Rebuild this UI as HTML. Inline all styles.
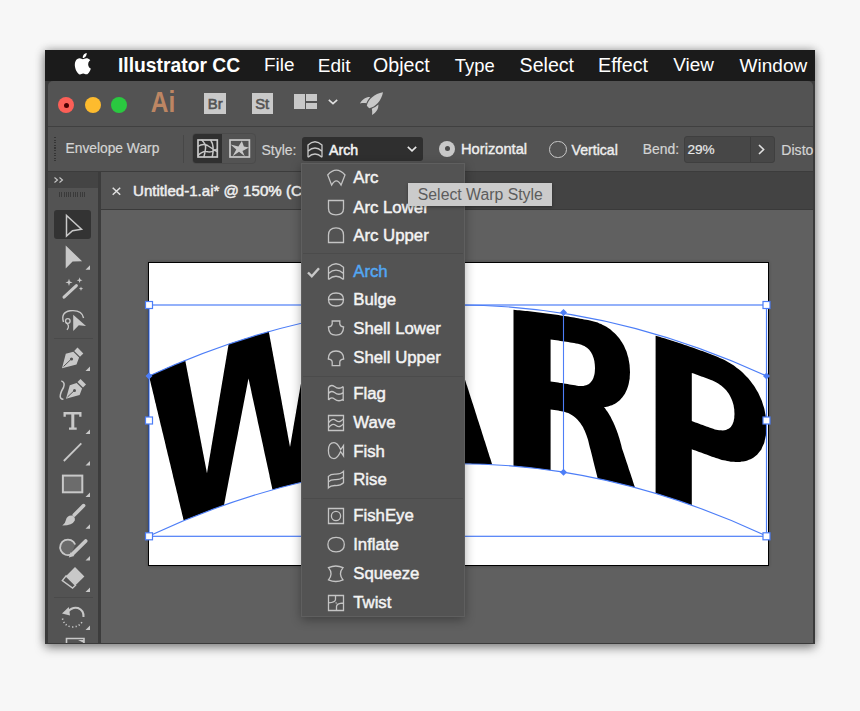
<!DOCTYPE html>
<html><head><meta charset="utf-8">
<style>
*{margin:0;padding:0;box-sizing:border-box}
html,body{width:860px;height:711px;overflow:hidden;background:#f7f7f7;font-family:"Liberation Sans",sans-serif}
.a{position:absolute}
.t{position:absolute;white-space:nowrap;line-height:1}
svg{position:absolute;overflow:visible}
</style></head><body>
<div class="a" style="left:45px;top:50px;width:770px;height:594px;background:#3a3a3a;box-shadow:0 4px 10px rgba(0,0,0,0.38),0 0 9px rgba(0,0,0,0.28)"></div>
<div class="a" style="left:45px;top:50px;width:770px;height:31px;background:#1b1b1b"></div>
<div class="a" style="left:47.5px;top:81px;width:765.5px;height:562px;background:#535353;border-radius:5px 5px 0 0"></div>
<svg style="left:72.6px;top:53.4px" width="19.6" height="21.4" viewBox="0 0 24 24" preserveAspectRatio="none"><path fill="#fff" d="M12.152 6.896c-.948 0-2.415-1.078-3.96-1.04-2.04.027-3.91 1.183-4.961 3.014-2.117 3.675-.546 9.103 1.519 12.09 1.013 1.454 2.208 3.09 3.792 3.039 1.52-.065 2.09-.987 3.935-.987 1.831 0 2.35.987 3.96.948 1.637-.026 2.676-1.48 3.676-2.948 1.156-1.688 1.636-3.325 1.662-3.415-.039-.013-3.182-1.221-3.22-4.857-.026-3.04 2.48-4.494 2.597-4.559-1.429-2.09-3.623-2.324-4.39-2.376-2-.156-3.675 1.09-4.61 1.09zM15.53 3.83c.843-1.012 1.4-2.427 1.245-3.83-1.207.052-2.662.805-3.532 1.818-.78.896-1.454 2.338-1.273 3.714 1.338.104 2.715-.688 3.559-1.701"/></svg>
<div class="t" style="left:118px;top:56.06px;font-size:19.3px;color:#fff;font-weight:bold;">Illustrator CC</div>
<div class="t" style="left:264px;top:56.40px;font-size:18.9px;color:#fff;font-weight:normal;">File</div>
<div class="t" style="left:317.8px;top:56.32px;font-size:19px;color:#fff;font-weight:normal;">Edit</div>
<div class="t" style="left:373px;top:55.81px;font-size:19.6px;color:#fff;font-weight:normal;">Object</div>
<div class="t" style="left:454.8px;top:56.82px;font-size:18.4px;color:#fff;font-weight:normal;">Type</div>
<div class="t" style="left:519.6px;top:55.81px;font-size:19.6px;color:#fff;font-weight:normal;">Select</div>
<div class="t" style="left:598px;top:55.72px;font-size:19.7px;color:#fff;font-weight:normal;">Effect</div>
<div class="t" style="left:673.3px;top:56.40px;font-size:18.9px;color:#fff;font-weight:normal;">View</div>
<div class="t" style="left:739.6px;top:56.32px;font-size:19px;color:#fff;font-weight:normal;">Window</div>
<div class="a" style="left:48px;top:125.6px;width:765px;height:1px;background:#404040"></div>
<div class="a" style="left:58.3px;top:97px;width:16px;height:16px;border-radius:50%;background:#fc5f57"></div>
<div class="a" style="left:84.6px;top:97px;width:16px;height:16px;border-radius:50%;background:#fdbb2e"></div>
<div class="a" style="left:110.9px;top:97px;width:16px;height:16px;border-radius:50%;background:#2ac840"></div>
<div class="a" style="left:63.8px;top:102.5px;width:5px;height:5px;border-radius:50%;background:#4a0002"></div>
<div class="t" style="left:150.8px;top:91.76px;font-size:24.5px;color:#bd8663;font-weight:bold;transform:scaleY(1.22);transform-origin:0 20.7px">Ai</div>
<div class="a" style="left:204.2px;top:92.8px;width:21.5px;height:21.5px;background:#c9c9c9"></div>
<div class="t" style="left:207.79999999999998px;top:96.67px;font-size:14.8px;color:#545454;font-weight:normal;-webkit-text-stroke:0.6px #545454">Br</div>
<div class="a" style="left:251.6px;top:92.8px;width:21.5px;height:21.5px;background:#c9c9c9"></div>
<div class="t" style="left:255.2px;top:96.67px;font-size:14.8px;color:#545454;font-weight:normal;-webkit-text-stroke:0.6px #545454">St</div>
<div class="a" style="left:294px;top:94.3px;width:10.6px;height:14.7px;background:#c8c8c8"></div>
<div class="a" style="left:306px;top:94.3px;width:10.7px;height:7px;background:#c8c8c8"></div>
<div class="a" style="left:306px;top:102.6px;width:10.7px;height:6.4px;background:#c8c8c8"></div>
<svg style="left:327.8px;top:99.3px" width="10" height="6"><path d="M0.8 0.8 L5 4.6 L9.2 0.8" fill="none" stroke="#e0e0e0" stroke-width="1.6"/></svg>
<svg style="left:359.8px;top:91.6px" width="23" height="23" viewBox="0 0 23 23"><path fill="#c8c8c8" d="M23 0.2 C14.5 1.5 8 7.5 6.8 13.8 L9.2 16.2 C15.5 15 21.5 8.5 23 0.2 Z M10.2 5 C6 4.8 2.2 7.2 0 11.5 C2.3 11 4.5 11 6.4 11.3 C7.3 9 8.6 6.8 10.2 5 Z M18.4 12.6 C18.6 17 16.2 20.8 12 23 C12.4 20.6 12.2 18.6 11.8 16.7 C14.2 15.8 16.4 14.4 18.4 12.6 Z"/></svg>
<div class="a" style="left:48px;top:171px;width:765px;height:1px;background:#3c3c3c"></div>
<div class="a" style="left:54px;top:137px;width:2.2px;height:24px;background:repeating-linear-gradient(#353535 0 1.2px,transparent 1.2px 2.6px)"></div>
<div class="t" style="left:65.5px;top:141.92px;font-size:13.8px;color:#d4d4d4;font-weight:normal;-webkit-text-stroke:0.2px #d4d4d4">Envelope Warp</div>
<div class="a" style="left:183px;top:135px;width:1px;height:28px;background:#474747"></div>
<div class="a" style="left:191.5px;top:133px;width:64.5px;height:31px;border:1px solid #4b4b4b;border-radius:4px"></div>
<div class="a" style="left:193px;top:134px;width:29px;height:29px;background:#303030;border-radius:3px 0 0 3px"></div>
<svg style="left:196.7px;top:139px" width="21.3" height="19" viewBox="0 0 21.3 19"><rect x="1" y="1" width="19.3" height="17" fill="none" stroke="#c8c8c8" stroke-width="1.7"/><path d="M0.8 7.5 Q6 4 10.5 6.5 Q15 9.5 20 12.5 M0.8 16.8 Q5.5 11.5 11 12.8 Q15 13.5 20 10 M4.5 0.8 Q9 5 8.6 9 Q8 14 6.8 18.2 M13.5 0.8 Q17.8 7 15.2 18.2" fill="none" stroke="#c8c8c8" stroke-width="1.5"/></svg>
<svg style="left:229.3px;top:139px" width="21.4" height="19" viewBox="0 0 21.4 19"><rect x="1" y="1" width="19.4" height="17" fill="none" stroke="#c8c8c8" stroke-width="1.7"/><path fill="#c8c8c8" d="M12.9 2 L14.9 7.5 L20 8.5 L13.5 12 L15.8 17.2 L10 12.7 L3.6 17.2 L7.3 10.6 L1.5 5.4 L9.4 7.5 Z"/></svg>
<div class="t" style="left:261.5px;top:142.75px;font-size:14px;color:#d4d4d4;font-weight:normal;-webkit-text-stroke:0.2px #d4d4d4">Style:</div>
<div class="a" style="left:302px;top:137px;width:121px;height:24px;background:#2f2f2f;border-radius:3px"></div>
<svg style="left:306.9px;top:140.5px" width="16" height="17" viewBox="0 0 16 17"><path d="M1 16.2 L1 4 Q8 -2.6 15 4 L15 16.2 M1 10.2 Q8 3.8 15 10.2 M1 16.2 Q8 9.8 15 16.2" fill="none" stroke="#c8c8c8" stroke-width="1.3"/></svg>
<div class="t" style="left:329px;top:142.58px;font-size:14.2px;color:#f4f4f4;font-weight:normal;-webkit-text-stroke:0.5px #f4f4f4">Arch</div>
<svg style="left:406.7px;top:146px" width="10" height="6"><path d="M0.8 0.8 L5 4.8 L9.2 0.8" fill="none" stroke="#e8e8e8" stroke-width="1.6"/></svg>
<div class="a" style="left:439.2px;top:140.9px;width:16px;height:16px;border-radius:50%;background:#c8c8c8"></div>
<div class="a" style="left:444.65px;top:146.35px;width:5.1px;height:5.1px;border-radius:50%;background:#4a4a4a"></div>
<div class="t" style="left:461px;top:142.16px;font-size:14.7px;color:#eeeeee;font-weight:normal;-webkit-text-stroke:0.4px #eeeeee">Horizontal</div>
<div class="a" style="left:549px;top:140.9px;width:17.5px;height:17.5px;border-radius:50%;border:1.6px solid #c8c8c8"></div>
<div class="t" style="left:571.6px;top:142.66px;font-size:14.1px;color:#eeeeee;font-weight:normal;-webkit-text-stroke:0.4px #eeeeee">Vertical</div>
<div class="t" style="left:642.8px;top:142.83px;font-size:13.9px;color:#d4d4d4;font-weight:normal;-webkit-text-stroke:0.2px #d4d4d4">Bend:</div>
<div class="a" style="left:683.5px;top:136px;width:91px;height:26.5px;background:#474747;border:1px solid #3f3f3f;border-radius:3px"></div>
<div class="a" style="left:750px;top:137px;width:1px;height:24.5px;background:#3c3c3c"></div>
<svg style="left:757.9px;top:144px" width="7" height="11"><path d="M1 1 L5.6 5.5 L1 10" fill="none" stroke="#e0e0e0" stroke-width="1.6"/></svg>
<div class="t" style="left:687.5px;top:143.09px;font-size:13.6px;color:#e8e8e8;font-weight:normal;-webkit-text-stroke:0.2px #e8e8e8">29%</div>
<div class="t" style="left:781.3px;top:142.66px;font-size:14.1px;color:#d4d4d4;font-weight:normal;width:32.3px;overflow:hidden;-webkit-text-stroke:0.2px #d4d4d4">Disto</div>
<div class="a" style="left:101px;top:172px;width:712px;height:37px;background:#434343"></div>
<div class="a" style="left:101px;top:172px;width:364px;height:37px;background:#535353"></div>
<div class="a" style="left:101px;top:209px;width:712px;height:1px;background:#3a3a3a"></div>
<svg style="left:111.7px;top:186.7px" width="9" height="8.5"><path d="M0.7 0.7 L8.2 7.8 M8.2 0.7 L0.7 7.8" stroke="#e0e0e0" stroke-width="1.5"/></svg>
<div class="t" style="left:133px;top:183.32px;font-size:15.1px;color:#eeeeee;font-weight:normal;-webkit-text-stroke:0.5px #eeeeee">Untitled-1.ai* @ 150% (CMYK/Preview)</div>
<div class="a" style="left:101px;top:210px;width:712px;height:433px;background:#606060"></div>
<div class="a" style="left:98px;top:172px;width:3px;height:471px;background:#3c3c3c"></div>
<div class="a" style="left:48px;top:172px;width:50px;height:16px;background:#444"></div>
<svg style="left:53.8px;top:176.6px" width="10" height="6"><path d="M0.5 0.5 L3.5 3 L0.5 5.5 M5.5 0.5 L8.5 3 L5.5 5.5" fill="none" stroke="#c8c8c8" stroke-width="1.1"/></svg>
<div class="a" style="left:59.4px;top:192px;width:25.6px;height:5.3px;background:repeating-linear-gradient(90deg,#3a3a3a 0 1px,transparent 1px 2.3px)"></div>
<div class="a" style="left:54.3px;top:210.2px;width:36.6px;height:28.6px;background:#333;border-radius:3px"></div>
<div class="a" style="left:54px;top:338px;width:38.7px;height:1px;background:#4a4a4a"></div>
<div class="a" style="left:54px;top:597px;width:38.7px;height:1px;background:#4a4a4a"></div>
<svg style="left:0;top:0" width="100" height="700"><path d="M66.5 215.5 L66.5 236 L72.5 230.8 L81.5 229.3 Z" fill="none" stroke="#c8c8c8" stroke-width="1.5" stroke-linejoin="miter"/><path d="M65.7 245.6 L65.7 268.6 L72.6 261.5 L82.1 261.2 Z" fill="#c8c8c8"/><path d="M64 297.2 L76.4 285.6" stroke="#c8c8c8" stroke-width="3" stroke-linecap="round"/><path d="M69 278.79999999999995 L69.9 281.5 L72.6 282.4 L69.9 283.29999999999995 L69 286.0 L68.1 283.29999999999995 L65.4 282.4 L68.1 281.5 Z M79.6 277.3 L80.35 279.45 L82.5 280.2 L80.35 280.95 L79.6 283.09999999999997 L78.85 280.95 L76.69999999999999 280.2 L78.85 279.45 Z M81 286.5 L81.6 288.09999999999997 L83.2 288.7 L81.6 289.3 L81 290.9 L80.4 289.3 L78.8 288.7 L80.4 288.09999999999997 Z " fill="#c8c8c8"/><path d="M63.5 322 Q60.5 312.5 70 310.8 Q82 309.5 83.6 318" fill="none" stroke="#c8c8c8" stroke-width="1.4"/><circle cx="67.8" cy="321" r="2.3" fill="none" stroke="#c8c8c8" stroke-width="1.3"/><path d="M65.8 322.5 Q70.5 325.5 67 329.8" fill="none" stroke="#c8c8c8" stroke-width="1.3"/><path d="M73.2 314.8 L73.2 331 L78.8 325.3 L86 326 Z" fill="#c8c8c8"/><path d="M77.5 347.6 L83.3 353.4 L80 356.7 L74.2 350.9 Z" fill="#c8c8c8"/><path d="M73.3 351.8 L79.1 357.6 L76.5 364.5 L62 368.3 L65.8 353.8 Z M67.5 363 L71.2 359.3" fill="#c8c8c8" stroke="#535353" stroke-width="0"/><circle cx="71.5" cy="359" r="1.6" fill="#535353"/><path d="M63.5 366.5 L70.5 359.8" stroke="#535353" stroke-width="1"/><path d="M80.5 379 L86 384.5 L83 387.5 L77.5 382 Z" fill="#c8c8c8"/><path d="M76.6 382.9 L82.1 388.4 L79.6 395 L66 398.8 L69.8 385.2 Z" fill="#c8c8c8"/><circle cx="74.5" cy="390.5" r="1.5" fill="#535353"/><path d="M67.5 397 L74 390.8" stroke="#535353" stroke-width="1"/><path d="M61.3 380.9 Q65.5 382.5 63.5 387.5 Q60.2 393 60.2 396.5 Q60.5 399.5 63.4 399.3" fill="none" stroke="#c8c8c8" stroke-width="1.5"/><path d="M63.5 412 L81.5 412 L81.5 416.8 L79.2 416.8 L79.2 414.6 L74.3 414.6 L74.3 427.4 L76.7 427.4 L76.7 429.8 L69 429.8 L69 427.4 L71.3 427.4 L71.3 414.6 L65.8 414.6 L65.8 416.8 L63.5 416.8 Z" fill="#c8c8c8"/><path d="M63.8 461 L81.3 443.3" stroke="#c8c8c8" stroke-width="1.8"/><rect x="62.9" y="475.6" width="19.4" height="16.7" fill="#6c6c6c" stroke="#c8c8c8" stroke-width="2"/><path d="M83.6 505.6 L74.2 515" stroke="#c8c8c8" stroke-width="3.6" stroke-linecap="round"/><path d="M71.6 515.4 Q75.6 516.6 74.8 520.4 Q72.3 525.6 62.3 525.5 Q65.4 523.3 65.9 519.9 Q67 515.2 71.6 515.4 Z" fill="#c8c8c8"/><path d="M71.5 554.3 A7.8 7.8 0 1 1 75.2 544.5" fill="#6a6a6a" stroke="#c8c8c8" stroke-width="1.8"/><path d="M85.7 541 L72.5 554" stroke="#c8c8c8" stroke-width="3.8" stroke-linecap="round"/><path d="M70.6 552.2 L74.3 555.9 L68.8 557.4 Z" fill="#c8c8c8"/><path d="M75 567 L84.4 576.4 L75.5 585.3 L66.1 575.9 Z" fill="#c8c8c8"/><path d="M66.1 575.9 L75.5 585.3 L72.6 588 L62.3 580.5 Z" fill="#535353" stroke="#c8c8c8" stroke-width="1.4"/><path d="M68 611.5 Q72.5 606.5 78 608 Q84 610.5 83.5 617" fill="none" stroke="#c8c8c8" stroke-width="2"/><path d="M62 613.5 L68.8 607 L70 615.5 Z" fill="#c8c8c8"/><path d="M62.5 618.5 Q64 626 72 627 Q79 627 82 622" fill="none" stroke="#c8c8c8" stroke-width="1.6" stroke-dasharray="1.2 2.2"/><path d="M66.5 643 L66.5 638.5 L84 638.5 L84 643" fill="none" stroke="#c8c8c8" stroke-width="1.6"/><path d="M78 640 L84 640 L84 643 Z" fill="#c8c8c8"/><path d="M90 269.7 L85.5 269.7 L90 265.2 Z" fill="#c8c8c8"/><path d="M90 371 L85.5 371 L90 366.5 Z" fill="#c8c8c8"/><path d="M90 434 L85.5 434 L90 429.5 Z" fill="#c8c8c8"/><path d="M90 465.4 L85.5 465.4 L90 460.9 Z" fill="#c8c8c8"/><path d="M90 497 L85.5 497 L90 492.5 Z" fill="#c8c8c8"/><path d="M90 528.8 L85.5 528.8 L90 524.3 Z" fill="#c8c8c8"/><path d="M90 560.5 L85.5 560.5 L90 556.0 Z" fill="#c8c8c8"/><path d="M90 592 L85.5 592 L90 587.5 Z" fill="#c8c8c8"/><path d="M90 630 L85.5 630 L90 625.5 Z" fill="#c8c8c8"/></svg>
<div class="a" style="left:147.5px;top:261.5px;width:621px;height:304px;background:#fff;border:1px solid #000;box-shadow:0 0 3px rgba(0,0,0,0.25)"></div>
<svg style="left:0;top:0" width="860" height="711"><path fill="#000" fill-rule="evenodd" d="M149.0 376.0 L150.9 375.1 L152.8 374.3 L154.7 373.4 L156.6 372.6 L158.5 371.7 L160.4 370.9 L162.3 370.0 L164.2 369.2 L166.1 368.3 L168.1 367.5 L170.0 366.7 L171.9 365.9 L173.8 365.1 L175.7 364.3 L177.6 363.5 L179.5 362.7 L181.4 361.9 L183.3 361.1 L185.2 360.3 L185.6 362.2 L185.9 364.0 L186.3 365.8 L186.6 367.6 L187.0 369.4 L187.3 371.2 L187.7 373.1 L188.0 374.9 L188.4 376.7 L188.7 378.5 L189.1 380.3 L189.4 382.2 L189.8 384.0 L190.1 385.8 L190.5 387.6 L190.8 389.4 L191.2 391.3 L191.5 393.1 L191.9 394.9 L192.2 396.7 L192.6 398.5 L192.9 400.4 L193.3 402.2 L193.6 404.0 L194.0 405.8 L194.3 407.6 L194.7 409.5 L195.0 411.3 L195.4 413.1 L195.7 414.9 L196.1 416.7 L196.5 418.6 L196.8 420.4 L197.2 422.2 L197.5 424.0 L197.9 425.9 L198.2 427.7 L198.6 429.5 L198.9 431.3 L199.3 433.1 L199.6 435.0 L200.0 436.8 L200.3 438.6 L200.7 440.4 L201.0 442.3 L201.4 444.1 L201.7 445.9 L202.1 447.7 L202.4 449.5 L202.8 451.4 L203.1 453.2 L203.5 455.0 L203.8 456.8 L204.2 458.7 L204.5 460.5 L204.9 462.3 L205.2 464.1 L205.6 466.0 L205.9 467.8 L206.3 469.6 L206.6 471.4 L207.0 473.3 L207.3 471.2 L207.7 469.1 L208.0 467.0 L208.4 464.9 L208.7 462.8 L209.1 460.7 L209.4 458.6 L209.8 456.5 L210.1 454.5 L210.5 452.4 L210.8 450.3 L211.2 448.2 L211.5 446.1 L211.9 444.0 L212.2 441.9 L212.6 439.8 L212.9 437.8 L213.3 435.7 L213.6 433.6 L214.0 431.5 L214.3 429.4 L214.7 427.3 L215.0 425.3 L215.4 423.2 L215.7 421.1 L216.1 419.0 L216.4 416.9 L216.8 414.8 L217.1 412.7 L217.5 410.7 L217.8 408.6 L218.1 406.5 L218.5 404.4 L218.8 402.3 L219.2 400.2 L219.5 398.2 L219.9 396.1 L220.2 394.0 L220.6 391.9 L220.9 389.8 L221.3 387.8 L221.6 385.7 L222.0 383.6 L222.3 381.5 L222.7 379.4 L223.0 377.4 L223.4 375.3 L223.7 373.2 L224.1 371.1 L224.4 369.0 L224.8 367.0 L225.1 364.9 L225.5 362.8 L225.8 360.7 L226.2 358.7 L226.5 356.6 L226.9 354.5 L227.2 352.4 L227.6 350.3 L227.9 348.3 L228.3 346.2 L228.6 344.1 L230.5 343.5 L232.4 342.8 L234.3 342.2 L236.3 341.5 L238.2 340.9 L240.1 340.3 L242.0 339.7 L243.9 339.1 L245.8 338.5 L247.7 337.9 L249.7 337.3 L251.6 336.7 L253.5 336.1 L255.4 335.5 L257.3 334.9 L259.2 334.4 L261.1 333.8 L263.1 333.2 L265.0 332.7 L266.9 332.1 L268.8 331.6 L269.1 333.5 L269.5 335.3 L269.8 337.2 L270.2 339.0 L270.5 340.9 L270.9 342.7 L271.2 344.6 L271.5 346.5 L271.9 348.3 L272.2 350.2 L272.6 352.0 L272.9 353.9 L273.2 355.8 L273.6 357.6 L273.9 359.5 L274.3 361.3 L274.6 363.2 L275.0 365.1 L275.3 366.9 L275.6 368.8 L276.0 370.6 L276.3 372.5 L276.7 374.4 L277.0 376.2 L277.3 378.1 L277.7 379.9 L278.0 381.8 L278.4 383.7 L278.7 385.5 L279.1 387.4 L279.4 389.3 L279.7 391.1 L280.1 393.0 L280.4 394.8 L280.8 396.7 L281.1 398.6 L281.5 400.4 L281.8 402.3 L282.1 404.2 L282.5 406.0 L282.8 407.9 L283.2 409.7 L283.5 411.6 L283.8 413.5 L284.2 415.3 L284.5 417.2 L284.9 419.1 L285.2 420.9 L285.6 422.8 L285.9 424.7 L286.2 426.5 L286.6 428.4 L286.9 430.3 L287.3 432.1 L287.6 434.0 L287.9 435.8 L288.3 437.7 L288.6 439.6 L289.0 441.4 L289.3 443.3 L289.7 445.2 L290.0 447.0 L290.4 445.0 L290.7 443.0 L291.1 440.9 L291.4 438.9 L291.8 436.8 L292.1 434.8 L292.5 432.8 L292.8 430.7 L293.2 428.7 L293.5 426.6 L293.9 424.6 L294.2 422.6 L294.6 420.5 L294.9 418.5 L295.3 416.4 L295.6 414.4 L296.0 412.4 L296.3 410.3 L296.7 408.3 L297.0 406.2 L297.4 404.2 L297.7 402.2 L298.1 400.1 L298.4 398.1 L298.8 396.1 L299.1 394.0 L299.5 392.0 L299.8 390.0 L300.2 387.9 L300.5 385.9 L300.9 383.9 L301.3 381.8 L301.6 379.8 L302.0 377.7 L302.3 375.7 L302.7 373.7 L303.0 371.6 L303.4 369.6 L303.7 367.6 L304.1 365.5 L304.4 363.5 L304.8 361.5 L305.1 359.4 L305.5 357.4 L305.8 355.4 L306.2 353.3 L306.5 351.3 L306.9 349.3 L307.2 347.3 L307.6 345.2 L307.9 343.2 L308.3 341.2 L308.6 339.1 L309.0 337.1 L309.3 335.1 L309.7 333.0 L310.0 331.0 L310.4 329.0 L310.7 327.0 L311.1 324.9 L311.4 322.9 L311.8 320.9 L313.7 320.5 L315.6 320.1 L317.5 319.7 L319.4 319.3 L321.3 318.9 L323.2 318.5 L325.1 318.1 L327.0 317.7 L328.9 317.4 L330.9 317.0 L332.8 316.6 L334.7 316.3 L336.6 315.9 L338.5 315.6 L340.4 315.3 L342.3 314.9 L344.2 314.6 L346.1 314.3 L348.0 314.0 L347.6 316.0 L347.1 318.0 L346.7 320.0 L346.3 322.0 L345.8 324.0 L345.4 326.0 L345.0 328.0 L344.5 330.1 L344.1 332.1 L343.6 334.1 L343.2 336.1 L342.8 338.1 L342.3 340.1 L341.9 342.1 L341.5 344.1 L341.0 346.1 L340.6 348.2 L340.2 350.2 L339.7 352.2 L339.3 354.2 L338.9 356.2 L338.4 358.2 L338.0 360.3 L337.6 362.3 L337.1 364.3 L336.7 366.3 L336.2 368.3 L335.8 370.3 L335.4 372.4 L334.9 374.4 L334.5 376.4 L334.1 378.4 L333.6 380.4 L333.2 382.4 L332.8 384.5 L332.3 386.5 L331.9 388.5 L331.5 390.5 L331.0 392.5 L330.6 394.6 L330.1 396.6 L329.7 398.6 L329.3 400.6 L328.8 402.7 L328.4 404.7 L328.0 406.7 L327.5 408.7 L327.1 410.7 L326.7 412.8 L326.2 414.8 L325.8 416.8 L325.4 418.8 L324.9 420.9 L324.5 422.9 L324.1 424.9 L323.6 426.9 L323.2 429.0 L322.7 431.0 L322.3 433.0 L321.9 435.1 L321.4 437.1 L321.0 439.1 L320.6 441.1 L320.1 443.2 L319.7 445.2 L319.3 447.2 L318.8 449.3 L318.4 451.3 L318.0 453.3 L317.5 455.3 L317.1 457.4 L316.7 459.4 L316.2 461.4 L315.8 463.5 L315.3 465.5 L314.9 467.5 L314.5 469.6 L314.0 471.6 L313.6 473.6 L313.2 475.7 L312.7 477.7 L312.3 479.7 L310.3 480.2 L308.3 480.6 L306.3 481.1 L304.3 481.5 L302.4 482.0 L300.4 482.5 L298.4 483.0 L296.4 483.4 L294.4 483.9 L292.4 484.4 L290.4 484.9 L288.4 485.4 L286.4 485.9 L284.4 486.5 L282.4 487.0 L280.5 487.5 L278.5 488.1 L276.5 488.6 L274.5 489.2 L272.5 489.7 L272.1 487.9 L271.7 486.1 L271.3 484.2 L270.9 482.4 L270.5 480.6 L270.1 478.7 L269.7 476.9 L269.4 475.1 L269.0 473.3 L268.6 471.4 L268.2 469.6 L267.8 467.8 L267.4 465.9 L267.0 464.1 L266.6 462.3 L266.2 460.5 L265.8 458.6 L265.4 456.8 L265.0 455.0 L264.6 453.2 L264.2 451.3 L263.8 449.5 L263.5 447.7 L263.1 445.9 L262.7 444.0 L262.3 442.2 L261.9 440.4 L261.5 438.6 L261.1 436.7 L260.7 434.9 L260.3 433.1 L259.9 431.3 L259.5 429.4 L259.1 427.6 L258.7 425.8 L258.3 424.0 L257.9 422.2 L257.5 420.3 L257.2 418.5 L256.8 416.7 L256.4 414.9 L256.0 413.0 L255.6 411.2 L255.2 409.4 L254.8 407.6 L254.4 405.8 L254.0 403.9 L253.6 402.1 L253.2 400.3 L252.8 398.5 L252.4 396.7 L252.0 394.8 L251.6 393.0 L251.3 391.2 L250.9 389.4 L250.5 387.6 L250.1 385.7 L249.7 383.9 L249.3 382.1 L248.9 380.3 L248.5 378.5 L248.1 380.5 L247.7 382.6 L247.3 384.7 L246.9 386.7 L246.5 388.8 L246.1 390.9 L245.7 392.9 L245.3 395.0 L244.9 397.1 L244.5 399.2 L244.1 401.2 L243.7 403.3 L243.3 405.4 L242.9 407.4 L242.5 409.5 L242.1 411.6 L241.7 413.7 L241.3 415.7 L240.9 417.8 L240.5 419.9 L240.1 421.9 L239.7 424.0 L239.3 426.1 L238.9 428.2 L238.5 430.2 L238.1 432.3 L237.7 434.4 L237.3 436.5 L236.9 438.5 L236.5 440.6 L236.0 442.7 L235.6 444.8 L235.2 446.8 L234.8 448.9 L234.4 451.0 L234.0 453.1 L233.6 455.2 L233.2 457.2 L232.8 459.3 L232.4 461.4 L232.0 463.5 L231.6 465.5 L231.2 467.6 L230.8 469.7 L230.4 471.8 L230.0 473.9 L229.6 476.0 L229.2 478.0 L228.8 480.1 L228.4 482.2 L228.0 484.3 L227.6 486.4 L227.2 488.4 L226.8 490.5 L226.4 492.6 L226.0 494.7 L225.6 496.8 L225.2 498.9 L224.8 500.9 L224.4 503.0 L224.0 505.1 L222.1 505.8 L220.2 506.5 L218.2 507.2 L216.3 507.9 L214.4 508.6 L212.5 509.3 L210.6 510.0 L208.6 510.7 L206.7 511.5 L204.8 512.2 L202.9 512.9 L201.0 513.7 L199.1 514.4 L197.1 515.2 L195.2 515.9 L193.3 516.7 L191.4 517.5 L189.5 518.3 L187.5 519.0 L185.6 519.8 L183.7 520.6 L183.3 518.9 L182.9 517.1 L182.4 515.3 L182.0 513.5 L181.6 511.8 L181.2 510.0 L180.7 508.2 L180.3 506.5 L179.9 504.7 L179.5 502.9 L179.0 501.2 L178.6 499.4 L178.2 497.6 L177.8 495.8 L177.4 494.1 L176.9 492.3 L176.5 490.5 L176.1 488.8 L175.7 487.0 L175.2 485.2 L174.8 483.5 L174.4 481.7 L174.0 479.9 L173.5 478.2 L173.1 476.4 L172.7 474.6 L172.3 472.9 L171.9 471.1 L171.4 469.3 L171.0 467.6 L170.6 465.8 L170.2 464.0 L169.7 462.3 L169.3 460.5 L168.9 458.7 L168.5 457.0 L168.0 455.2 L167.6 453.5 L167.2 451.7 L166.8 449.9 L166.3 448.2 L165.9 446.4 L165.5 444.6 L165.1 442.9 L164.7 441.1 L164.2 439.3 L163.8 437.6 L163.4 435.8 L163.0 434.1 L162.5 432.3 L162.1 430.5 L161.7 428.8 L161.3 427.0 L160.8 425.3 L160.4 423.5 L160.0 421.7 L159.6 420.0 L159.2 418.2 L158.7 416.5 L158.3 414.7 L157.9 412.9 L157.5 411.2 L157.0 409.4 L156.6 407.7 L156.2 405.9 L155.8 404.1 L155.3 402.4 L154.9 400.6 L154.5 398.9 L154.1 397.1 L153.7 395.3 L153.2 393.6 L152.8 391.8 L152.4 390.1 L152.0 388.3 L151.5 386.6 L151.1 384.8 L150.7 383.0 L150.3 381.3 L149.8 379.5 L149.4 377.8 L149.0 376.0ZM492.2 464.6 L491.6 462.7 L491.0 460.8 L490.4 458.8 L489.7 456.9 L489.1 455.0 L488.5 453.1 L487.9 451.2 L487.3 449.2 L486.7 447.3 L486.1 445.4 L485.5 443.5 L484.9 441.6 L484.2 439.7 L483.6 437.8 L483.0 435.8 L482.4 433.9 L481.8 432.0 L481.2 430.1 L480.6 428.2 L480.0 426.3 L479.4 424.4 L478.8 422.5 L478.1 420.6 L477.5 418.7 L476.9 416.7 L476.3 414.8 L475.7 412.9 L475.1 411.0 L474.5 409.1 L473.9 407.2 L473.3 405.3 L472.7 403.4 L472.0 401.5 L471.4 399.6 L470.8 397.7 L470.2 395.8 L469.6 393.9 L469.0 392.0 L468.4 390.1 L467.8 388.2 L467.2 386.3 L466.5 384.4 L465.9 382.5 L465.3 380.6 L464.7 378.7 L464.1 376.8 L463.5 374.9 L462.9 373.0 L462.3 371.1 L461.7 369.2 L461.1 367.4 L460.4 365.5 L459.8 363.6 L459.2 361.7 L458.6 359.8 L458.0 357.9 L457.4 356.0 L456.8 354.1 L456.2 352.2 L455.6 350.3 L455.0 348.5 L454.3 346.6 L453.7 344.7 L453.1 342.8 L452.5 340.9 L451.9 339.0 L451.3 337.1 L450.7 335.3 L450.1 333.4 L449.5 331.5 L448.8 329.6 L448.2 327.7 L447.6 325.9 L447.0 324.0 L446.4 322.1 L445.8 320.2 L445.2 318.3 L444.6 316.5 L444.0 314.6 L443.4 312.7 L442.7 310.8 L442.1 309.0 L441.5 307.1 L440.9 305.2 L439.0 305.3 L437.1 305.3 L435.1 305.4 L433.2 305.4 L431.3 305.5 L429.3 305.6 L427.4 305.7 L425.5 305.8 L423.5 305.9 L421.6 306.0 L419.7 306.1 L417.8 306.2 L415.8 306.3 L413.9 306.4 L412.0 306.6 L410.0 306.7 L408.1 306.8 L406.2 307.0 L404.2 307.1 L402.3 307.3 L400.4 307.5 L398.5 307.6 L396.5 307.8 L395.9 309.7 L395.3 311.7 L394.7 313.6 L394.1 315.6 L393.5 317.5 L392.8 319.5 L392.2 321.4 L391.6 323.4 L391.0 325.3 L390.4 327.3 L389.8 329.2 L389.2 331.2 L388.6 333.1 L387.9 335.1 L387.3 337.0 L386.7 339.0 L386.1 341.0 L385.5 342.9 L384.9 344.9 L384.3 346.8 L383.7 348.8 L383.0 350.7 L382.4 352.7 L381.8 354.7 L381.2 356.6 L380.6 358.6 L380.0 360.5 L379.4 362.5 L378.8 364.5 L378.1 366.4 L377.5 368.4 L376.9 370.4 L376.3 372.3 L375.7 374.3 L375.1 376.3 L374.5 378.2 L373.9 380.2 L373.2 382.2 L372.6 384.1 L372.0 386.1 L371.4 388.1 L370.8 390.0 L370.2 392.0 L369.6 394.0 L369.0 395.9 L368.3 397.9 L367.7 399.9 L367.1 401.9 L366.5 403.8 L365.9 405.8 L365.3 407.8 L364.7 409.8 L364.0 411.7 L363.4 413.7 L362.8 415.7 L362.2 417.7 L361.6 419.7 L361.0 421.6 L360.4 423.6 L359.8 425.6 L359.1 427.6 L358.5 429.6 L357.9 431.5 L357.3 433.5 L356.7 435.5 L356.1 437.5 L355.5 439.5 L354.9 441.5 L354.2 443.5 L353.6 445.4 L353.0 447.4 L352.4 449.4 L351.8 451.4 L351.2 453.4 L350.6 455.4 L350.0 457.4 L349.3 459.4 L348.7 461.4 L348.1 463.4 L347.5 465.3 L346.9 467.3 L346.3 469.3 L345.7 471.3 L345.1 473.3 L347.0 473.0 L348.9 472.7 L350.8 472.4 L352.7 472.1 L354.6 471.8 L356.5 471.5 L358.4 471.2 L360.3 470.9 L362.2 470.6 L364.1 470.3 L366.1 470.1 L368.0 469.8 L369.9 469.6 L371.8 469.3 L373.7 469.1 L375.6 468.8 L377.5 468.6 L379.4 468.4 L381.3 468.1 L383.2 467.9 L385.1 467.7 L385.7 465.7 L386.3 463.8 L386.9 461.8 L387.5 459.9 L388.1 457.9 L388.7 455.9 L389.2 454.0 L389.8 452.0 L390.4 450.1 L391.0 448.1 L391.6 446.1 L392.2 444.2 L392.8 442.2 L393.3 440.3 L393.9 438.3 L394.5 436.4 L395.1 434.4 L395.7 432.5 L396.3 430.5 L396.9 428.6 L397.4 426.6 L399.4 426.4 L401.3 426.3 L403.3 426.1 L405.2 425.9 L407.1 425.8 L409.1 425.6 L411.0 425.5 L412.9 425.4 L414.9 425.2 L416.8 425.1 L418.8 425.0 L420.7 424.9 L422.6 424.8 L424.6 424.7 L426.5 424.6 L428.5 424.5 L430.4 424.4 L432.3 424.3 L434.3 424.3 L436.2 424.2 L438.2 424.1 L440.1 424.1 L440.7 426.0 L441.3 427.9 L441.9 429.7 L442.4 431.6 L443.0 433.5 L443.6 435.4 L444.2 437.3 L444.8 439.2 L445.4 441.0 L446.0 442.9 L446.5 444.8 L447.1 446.7 L447.7 448.6 L448.3 450.5 L448.9 452.4 L449.5 454.3 L450.1 456.2 L450.6 458.0 L451.2 459.9 L451.8 461.8 L452.4 463.7 L454.4 463.7 L456.4 463.7 L458.4 463.7 L460.4 463.7 L462.3 463.7 L464.3 463.7 L466.3 463.8 L468.3 463.8 L470.3 463.8 L472.3 463.9 L474.3 463.9 L476.3 464.0 L478.3 464.0 L480.2 464.1 L482.2 464.2 L484.2 464.2 L486.2 464.3 L488.2 464.4 L490.2 464.5 L492.2 464.6ZM418.8 351.6 L419.1 352.9 L419.5 354.3 L420.1 356.1 L420.7 358.0 L421.3 359.8 L421.8 361.7 L422.4 363.5 L423.0 365.4 L423.6 367.3 L424.1 369.1 L424.7 371.0 L425.3 372.8 L425.9 374.7 L426.4 376.5 L427.0 378.4 L427.6 380.3 L428.2 382.1 L428.7 384.0 L429.3 385.8 L429.9 387.7 L430.5 389.6 L431.0 391.4 L431.6 393.3 L432.2 395.1 L432.8 397.0 L430.8 397.1 L428.8 397.2 L426.8 397.3 L424.8 397.4 L422.8 397.5 L420.8 397.6 L418.8 397.7 L416.8 397.8 L414.8 397.9 L412.8 398.1 L410.8 398.2 L408.8 398.3 L406.8 398.5 L404.8 398.6 L405.3 396.9 L405.8 395.2 L406.3 393.5 L406.8 391.8 L407.4 389.9 L408.0 387.9 L408.5 386.0 L409.1 384.1 L409.6 382.3 L410.2 380.6 L410.7 378.8 L411.2 377.0 L411.7 375.4 L412.2 373.9 L412.6 372.3 L413.1 370.7 L413.7 368.7 L414.3 366.8 L414.8 364.9 L415.3 363.2 L415.8 361.5 L416.3 359.8 L416.8 358.4 L417.2 356.9 L417.6 355.4 L418.2 353.5 L418.8 351.6 L418.8 351.6ZM513.5 309.8 L515.5 310.0 L517.4 310.2 L519.4 310.3 L521.3 310.5 L523.3 310.7 L525.3 310.9 L527.2 311.1 L529.2 311.3 L531.2 311.5 L533.1 311.7 L535.1 312.0 L537.0 312.2 L539.0 312.4 L541.0 312.7 L542.9 312.9 L544.9 313.2 L546.8 313.4 L548.8 313.7 L550.8 313.9 L552.7 314.2 L554.7 314.5 L556.7 314.8 L558.6 315.1 L560.6 315.4 L562.5 315.7 L564.5 316.0 L566.5 316.3 L568.4 316.6 L570.4 317.0 L572.3 317.3 L574.3 317.6 L576.3 318.0 L578.2 318.3 L580.2 318.7 L582.2 319.0 L584.1 319.4 L586.1 319.8 L588.0 320.1 L590.0 320.5 L591.9 321.1 L593.8 321.6 L595.8 322.1 L597.7 322.6 L599.4 323.4 L601.1 324.1 L602.8 324.9 L604.5 325.7 L606.0 326.6 L607.5 327.6 L609.0 328.6 L610.5 329.6 L611.8 330.7 L613.1 331.9 L614.4 333.0 L615.7 334.2 L616.8 335.5 L617.9 336.8 L619.0 338.1 L620.1 339.4 L621.0 340.9 L621.9 342.3 L622.8 343.8 L623.7 345.2 L624.4 346.8 L625.1 348.4 L625.8 349.9 L626.5 351.5 L627.0 353.2 L627.4 354.8 L627.9 356.5 L628.4 358.1 L628.7 359.9 L629.0 361.6 L629.3 363.3 L629.6 365.1 L629.7 366.9 L629.8 368.6 L629.9 370.4 L630.0 372.2 L629.9 373.8 L629.8 375.4 L629.7 376.9 L629.7 378.5 L629.4 379.9 L629.1 381.4 L628.9 382.8 L628.6 384.2 L628.1 385.9 L627.6 387.6 L627.0 389.3 L626.3 390.8 L625.6 392.3 L624.9 393.7 L624.0 395.0 L623.1 396.3 L622.2 397.6 L621.2 398.6 L620.2 399.7 L619.2 400.8 L618.1 401.6 L616.9 402.5 L615.8 403.3 L614.6 403.9 L613.3 404.6 L612.1 405.2 L610.8 405.6 L609.4 406.1 L608.1 406.5 L606.8 406.7 L605.4 406.9 L604.0 407.1 L605.2 408.6 L606.3 410.2 L607.5 411.8 L608.6 413.5 L609.6 415.3 L610.7 417.1 L611.6 419.0 L612.6 420.9 L613.3 422.3 L613.9 423.7 L614.5 425.0 L615.1 426.4 L615.7 427.9 L616.2 429.3 L616.8 430.8 L617.3 432.3 L617.9 433.8 L618.4 435.4 L618.9 436.9 L619.4 438.5 L619.8 440.1 L620.3 441.7 L620.7 443.3 L621.2 445.0 L621.6 446.7 L622.0 448.4 L622.7 450.4 L623.4 452.5 L624.1 454.5 L624.7 456.6 L625.4 458.6 L626.1 460.7 L626.8 462.8 L627.5 464.8 L628.2 466.9 L628.8 468.9 L629.5 471.0 L630.2 473.1 L630.9 475.1 L631.6 477.2 L632.3 479.3 L632.9 481.3 L633.6 483.4 L634.3 485.4 L635.0 487.5 L633.0 487.0 L631.1 486.5 L629.1 486.0 L627.1 485.5 L625.2 484.9 L623.2 484.5 L621.3 484.0 L619.3 483.5 L617.3 483.0 L615.4 482.5 L613.4 482.1 L611.4 481.6 L609.5 481.2 L607.5 480.7 L605.6 480.3 L603.6 479.8 L601.6 479.4 L599.7 479.0 L597.7 478.5 L597.2 476.5 L596.7 474.5 L596.2 472.4 L595.7 470.4 L595.1 468.3 L594.6 466.3 L594.1 464.3 L593.6 462.2 L593.1 460.2 L592.6 458.1 L592.1 456.1 L591.6 454.1 L591.1 452.0 L590.6 450.0 L590.0 448.0 L589.5 445.9 L589.0 443.9 L588.5 441.8 L588.0 439.8 L587.5 438.2 L586.9 436.6 L586.4 434.9 L585.8 433.5 L585.2 432.0 L584.6 430.5 L583.9 429.2 L583.3 427.8 L582.6 426.5 L581.4 424.7 L580.3 423.0 L579.0 421.4 L577.8 419.9 L576.3 418.5 L574.9 417.2 L573.3 416.1 L571.7 414.9 L570.0 414.0 L568.2 413.1 L566.2 412.5 L564.3 411.8 L562.9 411.5 L561.4 411.2 L560.0 410.9 L558.1 410.6 L556.2 410.3 L554.4 410.0 L552.5 409.8 L550.6 409.5 L550.6 411.5 L550.6 413.4 L550.6 415.4 L550.6 417.3 L550.6 419.3 L550.6 421.2 L550.6 423.2 L550.6 425.2 L550.6 427.1 L550.6 429.1 L550.6 431.0 L550.6 433.0 L550.6 435.0 L550.6 436.9 L550.6 438.9 L550.6 440.8 L550.6 442.8 L550.6 444.8 L550.6 446.7 L550.6 448.7 L550.6 450.6 L550.6 452.6 L550.6 454.6 L550.6 456.5 L550.6 458.5 L550.6 460.4 L550.6 462.4 L550.6 464.4 L550.6 466.3 L550.6 468.3 L550.6 470.2 L548.6 470.0 L546.7 469.7 L544.7 469.4 L542.8 469.2 L540.8 468.9 L538.9 468.7 L536.9 468.5 L535.0 468.2 L533.0 468.0 L531.1 467.8 L529.1 467.6 L527.2 467.4 L525.2 467.2 L523.3 467.0 L521.3 466.8 L519.4 466.6 L517.4 466.4 L515.5 466.2 L513.5 466.1 L513.5 464.1 L513.5 462.1 L513.5 460.1 L513.5 458.1 L513.5 456.2 L513.5 454.2 L513.5 452.2 L513.5 450.2 L513.5 448.3 L513.5 446.3 L513.5 444.3 L513.5 442.3 L513.5 440.3 L513.5 438.4 L513.5 436.4 L513.5 434.4 L513.5 432.4 L513.5 430.5 L513.5 428.5 L513.5 426.5 L513.5 424.5 L513.5 422.5 L513.5 420.6 L513.5 418.6 L513.5 416.6 L513.5 414.6 L513.5 412.7 L513.5 410.7 L513.5 408.7 L513.5 406.7 L513.5 404.7 L513.5 402.8 L513.5 400.8 L513.5 398.8 L513.5 396.8 L513.5 394.9 L513.5 392.9 L513.5 390.9 L513.5 388.9 L513.5 386.9 L513.5 385.0 L513.5 383.0 L513.5 381.0 L513.5 379.0 L513.5 377.1 L513.5 375.1 L513.5 373.1 L513.5 371.1 L513.5 369.1 L513.5 367.2 L513.5 365.2 L513.5 363.2 L513.5 361.2 L513.5 359.3 L513.5 357.3 L513.5 355.3 L513.5 353.3 L513.5 351.3 L513.5 349.4 L513.5 347.4 L513.5 345.4 L513.5 343.4 L513.5 341.5 L513.5 339.5 L513.5 337.5 L513.5 335.5 L513.5 333.5 L513.5 331.6 L513.5 329.6 L513.5 327.6 L513.5 325.6 L513.5 323.7 L513.5 321.7 L513.5 319.7 L513.5 317.7 L513.5 315.7 L513.5 313.8 L513.5 311.8 L513.5 309.8ZM550.6 339.4 L552.6 339.7 L554.5 340.0 L556.5 340.3 L558.4 340.6 L560.4 340.9 L562.3 341.2 L564.3 341.5 L566.3 341.8 L568.2 342.1 L570.2 342.4 L572.1 342.8 L574.1 343.1 L576.0 343.5 L578.0 343.8 L579.7 344.2 L581.4 344.7 L582.9 345.4 L584.4 346.0 L585.7 346.9 L587.0 347.7 L588.1 348.8 L589.2 349.8 L590.1 351.1 L591.0 352.3 L591.7 353.6 L592.5 355.0 L593.0 356.5 L593.6 358.0 L594.0 359.6 L594.4 361.2 L594.6 362.9 L594.8 364.6 L594.9 366.3 L595.0 368.1 L594.9 370.0 L594.8 371.8 L594.6 373.5 L594.3 375.1 L593.8 376.6 L593.4 378.1 L592.8 379.3 L592.1 380.6 L591.3 381.6 L590.5 382.6 L589.5 383.4 L588.5 384.2 L587.3 384.7 L586.2 385.3 L584.8 385.6 L583.5 385.9 L582.0 386.0 L580.4 386.1 L578.7 385.9 L577.0 385.7 L575.1 385.3 L573.2 385.0 L571.3 384.7 L569.5 384.4 L567.6 384.1 L565.7 383.7 L563.8 383.4 L561.9 383.1 L560.0 382.9 L558.1 382.6 L556.3 382.3 L554.4 382.0 L552.5 381.7 L550.6 381.5 L550.6 379.5 L550.6 377.5 L550.6 375.5 L550.6 373.5 L550.6 371.5 L550.6 369.5 L550.6 367.5 L550.6 365.5 L550.6 363.5 L550.6 361.5 L550.6 359.5 L550.6 357.5 L550.6 355.5 L550.6 353.5 L550.6 351.5 L550.6 349.4 L550.6 347.4 L550.6 345.4 L550.6 343.4 L550.6 341.4 L550.6 339.4ZM655.6 335.7 L657.5 336.2 L659.5 336.8 L661.4 337.4 L663.4 338.0 L665.3 338.6 L667.3 339.2 L669.2 339.8 L671.2 340.4 L673.1 341.1 L675.1 341.7 L677.0 342.3 L679.0 343.0 L680.9 343.6 L682.9 344.3 L684.8 344.9 L686.8 345.6 L688.7 346.3 L690.7 346.9 L692.6 347.6 L694.6 348.3 L696.5 349.0 L698.5 349.7 L700.4 350.4 L702.4 351.1 L704.3 351.8 L706.3 352.5 L708.2 353.2 L710.2 354.0 L712.1 354.7 L714.1 355.4 L716.0 356.2 L717.9 357.0 L719.8 357.9 L721.7 358.7 L723.5 359.6 L725.4 360.5 L727.1 361.5 L728.8 362.5 L730.5 363.5 L732.2 364.6 L733.9 365.6 L735.4 366.8 L736.9 368.0 L738.4 369.1 L740.0 370.3 L741.5 371.5 L743.1 373.1 L744.7 374.8 L746.4 376.4 L748.0 378.1 L749.4 379.8 L750.8 381.6 L752.2 383.4 L753.6 385.2 L754.8 387.1 L755.9 389.0 L757.1 390.9 L758.2 392.8 L759.1 394.8 L760.0 396.8 L760.9 398.8 L761.8 400.8 L762.5 402.9 L763.1 405.0 L763.8 407.1 L764.4 409.1 L764.8 411.3 L765.2 413.4 L765.6 415.6 L766.0 417.7 L766.1 419.4 L766.2 421.2 L766.3 422.9 L766.4 424.7 L766.5 426.4 L766.4 428.2 L766.3 430.0 L766.1 431.8 L766.0 433.6 L765.9 435.5 L765.5 437.0 L765.2 438.6 L764.8 440.1 L764.5 441.7 L764.1 443.2 L763.5 444.5 L762.9 445.8 L762.3 447.1 L761.7 448.4 L761.2 449.7 L760.3 450.7 L759.5 451.8 L758.7 452.8 L757.9 453.8 L757.1 454.8 L755.8 455.8 L754.6 456.7 L753.3 457.7 L752.0 458.6 L750.5 459.2 L748.9 459.8 L747.4 460.4 L745.9 461.0 L744.5 461.2 L743.0 461.4 L741.6 461.6 L740.2 461.9 L738.8 462.1 L737.2 462.0 L735.5 461.9 L733.9 461.8 L732.3 461.8 L730.7 461.7 L728.9 461.3 L727.1 461.0 L725.4 460.6 L723.6 460.3 L721.8 459.9 L719.8 459.3 L717.9 458.6 L715.9 458.0 L714.0 457.3 L712.0 456.7 L710.2 456.0 L708.3 455.3 L706.5 454.6 L704.7 453.9 L702.8 453.3 L701.0 452.6 L699.1 451.9 L697.3 451.2 L695.5 450.6 L693.6 449.9 L691.8 449.3 L691.8 451.3 L691.8 453.3 L691.8 455.3 L691.8 457.3 L691.8 459.3 L691.8 461.3 L691.8 463.3 L691.8 465.3 L691.8 467.3 L691.8 469.3 L691.8 471.3 L691.8 473.3 L691.8 475.2 L691.8 477.2 L691.8 479.2 L691.8 481.2 L691.8 483.2 L691.8 485.2 L691.8 487.2 L691.8 489.2 L691.8 491.2 L691.8 493.2 L691.8 495.2 L691.8 497.2 L691.8 499.2 L691.8 501.2 L691.8 503.2 L691.8 505.2 L689.9 504.5 L688.0 503.9 L686.1 503.2 L684.2 502.6 L682.3 501.9 L680.4 501.3 L678.5 500.6 L676.6 500.0 L674.7 499.4 L672.7 498.7 L670.8 498.1 L668.9 497.5 L667.0 496.9 L665.1 496.3 L663.2 495.7 L661.3 495.1 L659.4 494.5 L657.5 493.9 L655.6 493.4 L655.6 491.4 L655.6 489.4 L655.6 487.4 L655.6 485.4 L655.6 483.4 L655.6 481.4 L655.6 479.4 L655.6 477.4 L655.6 475.4 L655.6 473.4 L655.6 471.4 L655.6 469.4 L655.6 467.4 L655.6 465.4 L655.6 463.4 L655.6 461.4 L655.6 459.4 L655.6 457.4 L655.6 455.4 L655.6 453.4 L655.6 451.5 L655.6 449.5 L655.6 447.5 L655.6 445.5 L655.6 443.5 L655.6 441.5 L655.6 439.5 L655.6 437.5 L655.6 435.5 L655.6 433.5 L655.6 431.5 L655.6 429.5 L655.6 427.5 L655.6 425.5 L655.6 423.5 L655.6 421.5 L655.6 419.5 L655.6 417.5 L655.6 415.5 L655.6 413.5 L655.6 411.5 L655.6 409.5 L655.6 407.5 L655.6 405.5 L655.6 403.5 L655.6 401.5 L655.6 399.5 L655.6 397.6 L655.6 395.6 L655.6 393.6 L655.6 391.6 L655.6 389.6 L655.6 387.6 L655.6 385.6 L655.6 383.6 L655.6 381.6 L655.6 379.6 L655.6 377.6 L655.6 375.6 L655.6 373.6 L655.6 371.6 L655.6 369.6 L655.6 367.6 L655.6 365.6 L655.6 363.6 L655.6 361.6 L655.6 359.6 L655.6 357.6 L655.6 355.6 L655.6 353.6 L655.6 351.6 L655.6 349.6 L655.6 347.6 L655.6 345.6 L655.6 343.7 L655.6 341.7 L655.6 339.7 L655.6 337.7 L655.6 335.7ZM691.8 372.9 L693.7 373.6 L695.6 374.3 L697.6 375.0 L699.5 375.7 L701.4 376.4 L703.3 377.1 L705.2 377.8 L707.2 378.5 L709.1 379.2 L711.0 379.9 L712.5 380.6 L714.0 381.3 L715.5 382.0 L716.9 382.8 L718.2 383.6 L719.6 384.4 L721.4 385.8 L723.1 387.2 L724.7 388.8 L726.2 390.3 L727.5 392.0 L728.8 393.7 L729.8 395.6 L730.8 397.4 L731.6 399.3 L732.4 401.3 L733.0 403.3 L733.6 405.3 L733.9 407.4 L734.3 409.6 L734.3 411.0 L734.4 412.4 L734.5 413.9 L734.4 415.3 L734.3 416.6 L734.3 418.0 L733.9 419.8 L733.6 421.6 L733.0 423.1 L732.4 424.6 L731.6 425.8 L730.8 427.0 L729.7 427.9 L728.6 428.8 L727.3 429.3 L726.0 429.9 L724.4 430.2 L722.8 430.4 L720.9 430.3 L719.1 430.2 L717.7 429.9 L716.2 429.7 L714.8 429.4 L713.2 428.8 L711.6 428.3 L710.0 427.8 L708.2 427.1 L706.4 426.4 L704.5 425.7 L702.7 425.1 L700.9 424.4 L699.1 423.7 L697.3 423.1 L695.4 422.4 L693.6 421.8 L691.8 421.1 L691.8 419.1 L691.8 417.1 L691.8 415.1 L691.8 413.1 L691.8 411.1 L691.8 409.1 L691.8 407.1 L691.8 405.1 L691.8 403.1 L691.8 401.1 L691.8 399.0 L691.8 397.0 L691.8 395.0 L691.8 393.0 L691.8 391.0 L691.8 389.0 L691.8 387.0 L691.8 385.0 L691.8 383.0 L691.8 381.0 L691.8 379.0 L691.8 376.9 L691.8 374.9 L691.8 372.9Z"/><rect x="149" y="305" width="617.5" height="231.3" fill="none" stroke="#4d7ef7" stroke-width="1.2"/><path d="M149 376 Q457.75 234 766.5 376 M149 536 Q457.75 391.5 766.5 536 M563.5 312.5 L563.5 472.2" fill="none" stroke="#4d7ef7" stroke-width="1.1"/><rect x="145.5" y="301.5" width="7" height="7" fill="#fff" stroke="#4d7ef7" stroke-width="1.2"/><rect x="763.0" y="301.5" width="7" height="7" fill="#fff" stroke="#4d7ef7" stroke-width="1.2"/><rect x="145.5" y="417.0" width="7" height="7" fill="#fff" stroke="#4d7ef7" stroke-width="1.2"/><rect x="763.0" y="417.0" width="7" height="7" fill="#fff" stroke="#4d7ef7" stroke-width="1.2"/><rect x="145.5" y="532.8" width="7" height="7" fill="#fff" stroke="#4d7ef7" stroke-width="1.2"/><rect x="763.0" y="532.8" width="7" height="7" fill="#fff" stroke="#4d7ef7" stroke-width="1.2"/><path d="M149 372.5 L152.5 376 L149 379.5 L145.5 376 Z" fill="#4d7ef7"/><path d="M766.5 372.5 L770.0 376 L766.5 379.5 L763.0 376 Z" fill="#4d7ef7"/><path d="M563.5 309.0 L567.0 312.5 L563.5 316.0 L560.0 312.5 Z" fill="#4d7ef7"/><path d="M563.5 468.7 L567.0 472.2 L563.5 475.7 L560.0 472.2 Z" fill="#4d7ef7"/></svg>
<div class="a" style="left:301px;top:163px;width:164px;height:453.5px;background:#535353;border:1px solid #5f5f5f;box-shadow:0 3px 10px rgba(0,0,0,0.33)"></div>
<div class="a" style="left:303px;top:252.9px;width:160px;height:1px;background:#4b4b4b"></div>
<div class="a" style="left:303px;top:375.5px;width:160px;height:1px;background:#4b4b4b"></div>
<div class="a" style="left:303px;top:497.5px;width:160px;height:1px;background:#4b4b4b"></div>
<div class="t" style="left:353.2px;top:170.48px;font-size:16.8px;color:#f4f4f4;font-weight:normal;-webkit-text-stroke:0.45px #f4f4f4">Arc</div>
<div class="t" style="left:353.2px;top:199.78px;font-size:16.8px;color:#f4f4f4;font-weight:normal;-webkit-text-stroke:0.45px #f4f4f4">Arc Lower</div>
<div class="t" style="left:353.2px;top:228.28px;font-size:16.8px;color:#f4f4f4;font-weight:normal;-webkit-text-stroke:0.45px #f4f4f4">Arc Upper</div>
<div class="t" style="left:353.2px;top:263.98px;font-size:16.8px;color:#52a8f5;font-weight:normal;-webkit-text-stroke:0.45px #52a8f5">Arch</div>
<div class="t" style="left:353.2px;top:292.48px;font-size:16.8px;color:#f4f4f4;font-weight:normal;-webkit-text-stroke:0.45px #f4f4f4">Bulge</div>
<div class="t" style="left:353.2px;top:321.38px;font-size:16.8px;color:#f4f4f4;font-weight:normal;-webkit-text-stroke:0.45px #f4f4f4">Shell Lower</div>
<div class="t" style="left:353.2px;top:350.38px;font-size:16.8px;color:#f4f4f4;font-weight:normal;-webkit-text-stroke:0.45px #f4f4f4">Shell Upper</div>
<div class="t" style="left:353.2px;top:385.98px;font-size:16.8px;color:#f4f4f4;font-weight:normal;-webkit-text-stroke:0.45px #f4f4f4">Flag</div>
<div class="t" style="left:353.2px;top:415.08px;font-size:16.8px;color:#f4f4f4;font-weight:normal;-webkit-text-stroke:0.45px #f4f4f4">Wave</div>
<div class="t" style="left:353.2px;top:443.78px;font-size:16.8px;color:#f4f4f4;font-weight:normal;-webkit-text-stroke:0.45px #f4f4f4">Fish</div>
<div class="t" style="left:353.2px;top:472.38px;font-size:16.8px;color:#f4f4f4;font-weight:normal;-webkit-text-stroke:0.45px #f4f4f4">Rise</div>
<div class="t" style="left:353.2px;top:507.98px;font-size:16.8px;color:#f4f4f4;font-weight:normal;-webkit-text-stroke:0.45px #f4f4f4">FishEye</div>
<div class="t" style="left:353.2px;top:537.38px;font-size:16.8px;color:#f4f4f4;font-weight:normal;-webkit-text-stroke:0.45px #f4f4f4">Inflate</div>
<div class="t" style="left:353.2px;top:566.48px;font-size:16.8px;color:#f4f4f4;font-weight:normal;-webkit-text-stroke:0.45px #f4f4f4">Squeeze</div>
<div class="t" style="left:353.2px;top:595.38px;font-size:16.8px;color:#f4f4f4;font-weight:normal;-webkit-text-stroke:0.45px #f4f4f4">Twist</div>
<svg style="left:307px;top:266.5px" width="13" height="11"><path d="M1 5.5 L4.8 9.3 L12 1.2" fill="none" stroke="#c8c8c8" stroke-width="2.4"/></svg>
<svg style="left:327px;top:168.6px" width="18" height="18" viewBox="0 0 18 18"><path d="M0.7 6 Q9.3 -3.6 18 6 L14.1 16.1 Q9.3 7.7 4.6 16.1 Z" fill="none" stroke="#c4c4c4" stroke-width="1.3"/></svg>
<svg style="left:327px;top:198.6px" width="18" height="18" viewBox="0 0 18 18"><path d="M1.5 1.5 L16.5 1.5 L16.5 9.5 Q16.5 15.8 9 15.8 Q1.5 15.8 1.5 9.5 Z" fill="none" stroke="#c4c4c4" stroke-width="1.3"/></svg>
<svg style="left:327px;top:227.2px" width="18" height="18" viewBox="0 0 18 18"><path d="M1.5 15.5 L1.5 8 Q1.5 0.8 9 0.8 Q16.5 0.8 16.5 8 L16.5 15.5 Z" fill="none" stroke="#c4c4c4" stroke-width="1.3"/></svg>
<svg style="left:327px;top:262.6px" width="18" height="18" viewBox="0 0 18 18"><path d="M1.5 16.5 L1.5 4.2 Q9 -2.6 16.5 4.2 L16.5 16.5 M1.5 10.4 Q9 3.8 16.5 10.4 M1.5 16.5 Q9 10 16.5 16.5" fill="none" stroke="#c4c4c4" stroke-width="1.3"/></svg>
<svg style="left:327px;top:291.2px" width="18" height="18" viewBox="0 0 18 18"><path d="M1.5 8.5 Q1.5 2 9 2 Q16.5 2 16.5 8.5 Q16.5 15 9 15 Q1.5 15 1.5 8.5 Z M1.5 8.5 L16.5 8.5" fill="none" stroke="#c4c4c4" stroke-width="1.3"/></svg>
<svg style="left:327px;top:320.3px" width="18" height="18" viewBox="0 0 18 18"><path d="M5.2 1 L12.8 1 L12.8 4 Q13 6.5 16.6 7 Q16.4 15.2 9 15.2 Q1.6 15.2 1.4 7 Q5 6.5 5.2 4 Z" fill="none" stroke="#c4c4c4" stroke-width="1.3"/></svg>
<svg style="left:327px;top:349.3px" width="18" height="18" viewBox="0 0 18 18"><path d="M1.3 10 Q1.5 2 9 2 Q16.5 2 16.7 10 Q13 10.5 12.8 13 L12.8 16.6 L5.2 16.6 L5.2 13 Q5 10.5 1.3 10 Z" fill="none" stroke="#c4c4c4" stroke-width="1.3"/></svg>
<svg style="left:327px;top:383.6px" width="18" height="18" viewBox="0 0 18 18"><path d="M1.5 3.5 L1.5 16 M16.2 2.5 L16.2 17 M1.5 3.5 Q4 0 7.5 2.5 Q12 6 16.2 2.5 M1.5 9.5 Q4 6 7.5 8.5 Q12 12 16.2 8.5 M1.5 16 Q4 12.5 7.5 15 Q12 18.5 16.2 15" fill="none" stroke="#c4c4c4" stroke-width="1.3"/></svg>
<svg style="left:327px;top:413.6px" width="18" height="18" viewBox="0 0 18 18"><path d="M1.5 1.5 L16.5 1.5 L16.5 16.5 L1.5 16.5 Z M1.5 9 Q5 3.5 9 6.5 Q13 9.5 16.5 4.5 M1.5 14 Q5 8.5 9 11.5 Q13 14.5 16.5 9.5" fill="none" stroke="#c4c4c4" stroke-width="1.3"/></svg>
<svg style="left:327px;top:439.2px" width="18" height="21" viewBox="0 0 18 21"><path d="M13.6 10.6 Q10.5 3.6 7 3.6 Q1.4 3.6 1.4 11.6 Q1.4 19.6 7 19.6 Q10.5 19.6 13.6 12.6 Q15.2 14.8 16.5 16.8 L16.5 6.6 Q15.2 8.6 13.6 10.6 Z" fill="none" stroke="#c4c4c4" stroke-width="1.3"/></svg>
<svg style="left:327px;top:470.8px" width="18" height="18" viewBox="0 0 18 18"><path d="M1.4 5.4 C6 0.5 11 6 16.5 0.4 L16.5 11.8 C11 17.4 6 11.8 1.4 16.8 Z M1.4 10.9 C6 6 11 11.5 16.5 5.9" fill="none" stroke="#c4c4c4" stroke-width="1.3"/></svg>
<svg style="left:327px;top:506.6px" width="18" height="18" viewBox="0 0 18 18"><circle cx="9" cy="9" r="4.6" fill="none" stroke="#c4c4c4" stroke-width="1.3"/><path d="M1.5 1.5 L16.5 1.5 L16.5 16.5 L1.5 16.5 Z" fill="none" stroke="#c4c4c4" stroke-width="1.3"/></svg>
<svg style="left:327px;top:535.7px" width="18" height="18" viewBox="0 0 18 18"><path d="M0.9 8.6 Q0.9 1.3 9.1 1.3 Q17.3 1.3 17.3 8.6 Q17.3 15.9 9.1 15.9 Q0.9 15.9 0.9 8.6 Z" fill="none" stroke="#c4c4c4" stroke-width="1.3"/></svg>
<svg style="left:327px;top:564.5px" width="18" height="18" viewBox="0 0 18 18"><path d="M1.5 2.6 Q8.8 -0.6 16 2.6 Q11 8.7 16 14.8 Q8.8 18.2 1.5 14.8 Q6.5 8.7 1.5 2.6 Z" fill="none" stroke="#c4c4c4" stroke-width="1.3"/></svg>
<svg style="left:327px;top:594px" width="18" height="18" viewBox="0 0 18 18"><path d="M1.5 1.5 L16.5 1.5 L16.5 16.5 L1.5 16.5 Z M8.5 1.5 L8.5 5.5 Q8.5 8.5 1.5 8.8 M16.5 9 Q9.5 9.3 9.5 12.5 L9.5 16.5 M8.5 8.8 Q9.5 8.8 9.5 9.5" fill="none" stroke="#c4c4c4" stroke-width="1.3"/></svg>
<div class="a" style="left:408.3px;top:182.8px;width:143.5px;height:23.2px;background:#cbcbcb;box-shadow:0 1px 3px rgba(0,0,0,0.35)"></div>
<div class="t" style="left:417.8px;top:187.03px;font-size:15.8px;color:#5c5c5c;font-weight:normal;">Select Warp Style</div>
</body></html>
